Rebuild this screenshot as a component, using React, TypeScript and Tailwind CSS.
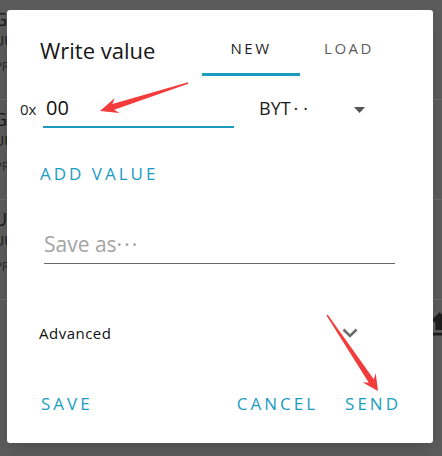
import React from "react";

const font = { fontFamily: '"Open Sans", "Noto Sans CJK SC", sans-serif' };

const services = [
  { name: "Generic Attribute", uuid: "UUID: 0x1801", kind: "PRIMARY SERVICE" },
  { name: "Generic Access", uuid: "UUID: 0x1800", kind: "PRIMARY SERVICE" },
  { name: "Unknown Service", uuid: "UUID: 0000ffe0", kind: "PRIMARY SERVICE" },
];

function BackgroundList() {
  return (
    <div className="flex flex-col">
      {services.map((s) => (
        <div key={s.name} className="flex h-[100px] flex-col border-b border-[#676767] pt-[7px] -ml-[6px]">
          <div className="text-[18px] leading-[24px] text-[#161616]">{s.name}</div>
          <div className="text-[14px] leading-[20px] text-[#1c1c1c]">{s.uuid}</div>
          <div className="mt-[5px] text-[13px] leading-[20px] text-[#2a2a2a]">{s.kind}</div>
        </div>
      ))}
      <div className="flex h-[100px] justify-end pt-[8px]">
        <svg viewBox="0 0 24 24" className="-mr-[14px] h-[33px] w-[33px] fill-[#1e1e1e]">
          <path d="M9 16h6v-6h4l-7-7-7 7h4zm-4 2h14v2H5z" />
        </svg>
      </div>
    </div>
  );
}

function Tab({ label, active }: { label: string; active?: boolean }) {
  return (
    <div className="flex h-[66px] w-[98px] flex-col items-center pt-[28px]">
      <div
        className={
          "text-[15px] leading-[20px] tracking-[2.5px] " +
          (active ? "text-[#1f1f1f]" : "text-[#5c5c5c]")
        }
      >
        {label}
      </div>
      <div className={"mt-auto h-[3px] w-full " + (active ? "bg-[#1b9cbf]" : "bg-transparent")} />
    </div>
  );
}

function WriteDialog() {
  return (
    <div
      className="absolute left-[7px] top-[10px] flex h-[433px] w-[426px] flex-col rounded-[3px] bg-white shadow-lg"
      style={font}
    >
      {/* header with tabs */}
      <div className="flex">
        <div className="w-[195px] pl-[33px] pt-[26px] text-[22px] leading-[28px] text-[#161616]">
          Write value
        </div>
        <Tab label="NEW" active />
        <Tab label="LOAD" />
      </div>

      {/* value row */}
      <div className="mt-[20px] flex items-start pl-[13px]">
        <div className="mt-[3px] w-[23px] text-[15px] leading-[20px] text-[#222]">0x</div>
        <div className="w-[191px] border-b-2 border-[#1b9cbf] pb-[6px] pl-[3px] text-[20px] leading-[24px] text-[#111]">
          00
        </div>
        <div className="ml-[18px] w-[102px] pl-[7px] text-[18px] leading-[24px] text-[#1c1c1c]">
          BYT<span className="ml-[3px] tracking-[5px]">··</span>
        </div>
        <svg viewBox="0 0 11 6" className="mt-[11px] h-[6px] w-[11px] fill-[#555]">
          <path d="M0 0h11L5.5 6z" />
        </svg>
      </div>

      <div className="mt-[36px] pl-[33px] text-[17px] leading-[20px] tracking-[3px] text-[#1b9cbf]">
        ADD VALUE
      </div>

      <div className="ml-[37px] mr-[38px] mt-[46px] border-b border-[#6a6a6a] pb-[5px] text-[21px] leading-[28px] text-[#a3a3a3]">
        Save as<span className="tracking-[2px]">···</span>
      </div>

      <div className="mt-[59px] flex items-center justify-between pl-[32px] pr-[75px]">
        <div className="text-[15px] leading-[20px] tracking-[0.5px] text-[#111]">Advanced</div>
        <svg viewBox="0 0 16 10" className="h-[10px] w-[16px]" fill="none" stroke="#6b6b6b" strokeWidth="2.6">
          <path d="M1.5 1.5l6.5 6.5 6.5-6.5" />
        </svg>
      </div>

      <div className="mt-[51px] flex pl-[34px] pr-[32px] text-[17px] leading-[20px] tracking-[3px] text-[#1b9cbf]">
        <div>SAVE</div>
        <div className="ml-auto">CANCEL</div>
        <div className="ml-[27px]">SEND</div>
      </div>
    </div>
  );
}

function Arrows() {
  return (
    <svg className="pointer-events-none absolute inset-0 h-[456px] w-[442px]" viewBox="0 0 442 456">
      <polygon
        fill="#f43b3b"
        points="188,82.3 112.4,104 114.8,97.9 100,111 119.6,113.1 114.2,109.7 188.3,83.7"
      />
      <polygon
        fill="#f43b3b"
        points="327.6,314.6 373.8,379.3 375.7,373.2 378,391 362.5,382.2 368.8,382.7 326.5,315.4"
      />
    </svg>
  );
}

export default function App() {
  return (
    <div className="relative h-[456px] w-[442px] overflow-hidden bg-[#5b5b5b]" style={font}>
      <BackgroundList />
      <WriteDialog />
      <Arrows />
    </div>
  );
}
